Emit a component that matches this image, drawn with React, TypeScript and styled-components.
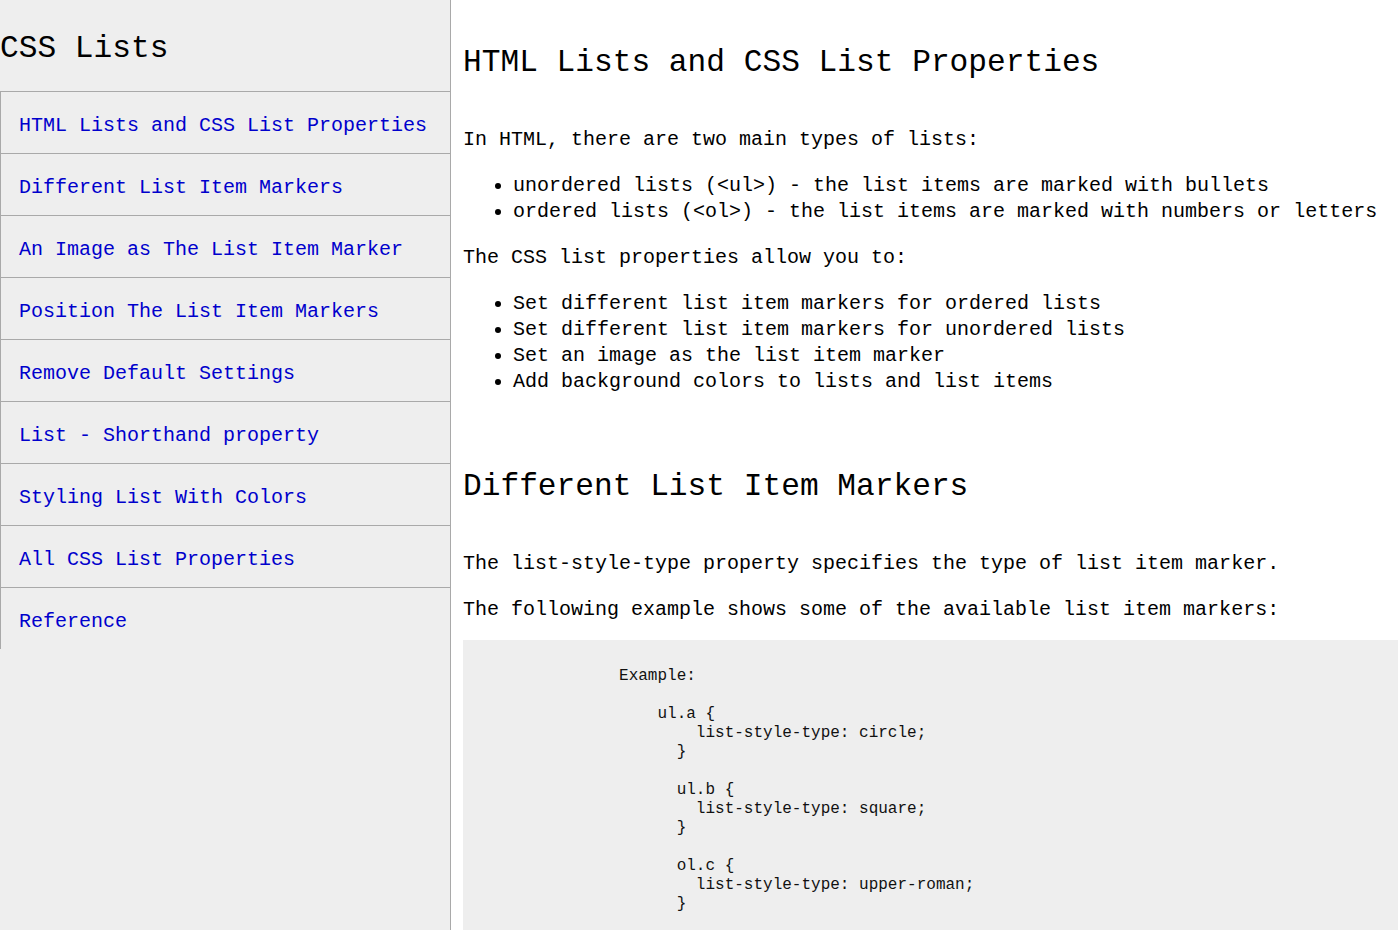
import React from "react";
import styled, { createGlobalStyle } from "styled-components";

const Global = createGlobalStyle`
  html, body { margin: 0; padding: 0; background: #ffffff; }
  body { font-family: "Liberation Mono", "DejaVu Sans Mono", monospace; color: #000; }
`;

const Page = styled.div`
  display: grid;
  grid-template-columns: 451px 1fr;
  min-height: 930px;
`;

const Sidebar = styled.aside`
  background: #eeeeee;
  border-right: 1px solid #a9a9a9;
  min-height: 930px;
`;

const SideTitle = styled.h1`
  margin: 0;
  padding: 29px 0 22px;
  font-size: 31.2px;
  line-height: 40px;
  font-weight: 400;
`;

const Nav = styled.ul`
  list-style: none;
  margin: 0;
  padding: 0;
  border-left: 1px solid #a9a9a9;
`;

const NavItem = styled.li`
  border-top: 1px solid #a9a9a9;
  padding: 21px 18px 14px;
  font-size: 20px;
  line-height: 26px;
`;

const NavLink = styled.a`
  color: #0000cc;
  text-decoration: none;
`;

const Main = styled.main`
  padding-left: 12px;
  min-width: 0;
`;

const Section = styled.section<{ $top: number }>`
  display: flow-root;
  padding-top: ${(p) => p.$top}px;
`;

const Heading = styled.h2`
  margin: 0 0 44px;
  font-size: 31.2px;
  line-height: 40px;
  font-weight: 400;
`;

const Para = styled.p<{ $gap?: number }>`
  margin: 0 0 ${(p) => p.$gap ?? 20}px;
  font-size: 20px;
  line-height: 26px;
`;

const Bullets = styled.ul`
  margin: 0 0 20px;
  padding-left: 50px;
  font-size: 20px;
  line-height: 26px;
  list-style: disc;
`;

const CodeBox = styled.pre`
  margin: 0;
  background: #eeeeee;
  padding: 27px 0 27px 12px;
  font-family: "Liberation Mono", "Courier New", monospace;
  font-size: 16px;
  line-height: 19px;
  color: #111;
`;

const navItems = [
  "HTML Lists and CSS List Properties",
  "Different List Item Markers",
  "An Image as The List Item Marker",
  "Position The List Item Markers",
  "Remove Default Settings",
  "List - Shorthand property",
  "Styling List With Colors",
  "All CSS List Properties",
  "Reference",
];

const code = [
  "               Example:",
  "",
  "                   ul.a {",
  "                       list-style-type: circle;",
  "                     }",
  "",
  "                     ul.b {",
  "                       list-style-type: square;",
  "                     }",
  "",
  "                     ol.c {",
  "                       list-style-type: upper-roman;",
  "                     }",
].join("\n");

export default function App() {
  return (
    <>
      <Global />
      <Page>
        <Sidebar>
          <SideTitle>CSS Lists</SideTitle>
          <Nav>
            {navItems.map((t) => (
              <NavItem key={t}>
                <NavLink href="#">{t}</NavLink>
              </NavItem>
            ))}
          </Nav>
        </Sidebar>
        <Main>
          <Section $top={43}>
            <Heading as="h1">HTML Lists and CSS List Properties</Heading>
            <Para>In HTML, there are two main types of lists:</Para>
            <Bullets>
              <li>unordered lists (&lt;ul&gt;) - the list items are marked with bullets</li>
              <li>ordered lists (&lt;ol&gt;) - the list items are marked with numbers or letters</li>
            </Bullets>
            <Para>The CSS list properties allow you to:</Para>
            <Bullets>
              <li>Set different list item markers for ordered lists</li>
              <li>Set different list item markers for unordered lists</li>
              <li>Set an image as the list item marker</li>
              <li>Add background colors to lists and list items</li>
            </Bullets>
          </Section>
          <Section $top={52}>
            <Heading>Different List Item Markers</Heading>
            <Para>The list-style-type property specifies the type of list item marker.</Para>
            <Para $gap={17}>The following example shows some of the available list item markers:</Para>
            <CodeBox>{code}</CodeBox>
          </Section>
        </Main>
      </Page>
    </>
  );
}
